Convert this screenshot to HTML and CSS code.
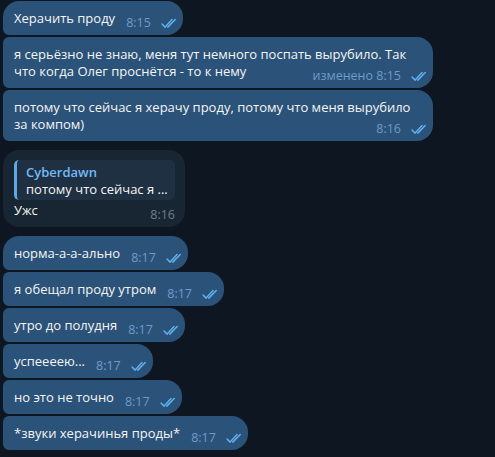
FILE: index.html
```html
<!DOCTYPE html>
<html lang="ru">
<head>
<meta charset="utf-8">
<title>Chat</title>
<link rel="stylesheet" href="styles.css">
</head>
<body>
<div class="chat">
  <div class="group">
    <div class="msg out first">Херачить проду<span class="meta"><span class="time">8:15</span><svg class="ticks" viewBox="0 0 16 10"><path d="M1 5.4 L3.9 8.4 L10.4 1.2"/><path d="M6.4 8.4 L13.4 1.2"/></svg></span></div>
    <div class="msg out">я серьёзно не знаю, меня тут немного поспать вырубило. Так что когда Олег проснётся - то к нему<span class="meta"><span class="time">изменено 8:15</span><svg class="ticks" viewBox="0 0 16 10"><path d="M1 5.4 L3.9 8.4 L10.4 1.2"/><path d="M6.4 8.4 L13.4 1.2"/></svg></span></div>
    <div class="msg out">потому что сейчас я херачу проду, потому что меня вырубило за компом)<span class="meta"><span class="time">8:16</span><svg class="ticks" viewBox="0 0 16 10"><path d="M1 5.4 L3.9 8.4 L10.4 1.2"/><path d="M6.4 8.4 L13.4 1.2"/></svg></span></div>
  </div>
  <div class="group">
    <div class="msg in">
      <div class="reply">
        <div class="reply-name">Cyberdawn</div>
        <div class="reply-text">потому что сейчас я ...</div>
      </div>
      <div class="body">Ужс<span class="meta"><span class="time">8:16</span></span></div>
    </div>
  </div>
  <div class="group">
    <div class="msg out first">норма-а-а-ально<span class="meta"><span class="time">8:17</span><svg class="ticks" viewBox="0 0 16 10"><path d="M1 5.4 L3.9 8.4 L10.4 1.2"/><path d="M6.4 8.4 L13.4 1.2"/></svg></span></div>
    <div class="msg out">я обещал проду утром<span class="meta"><span class="time">8:17</span><svg class="ticks" viewBox="0 0 16 10"><path d="M1 5.4 L3.9 8.4 L10.4 1.2"/><path d="M6.4 8.4 L13.4 1.2"/></svg></span></div>
    <div class="msg out">утро до полудня<span class="meta"><span class="time">8:17</span><svg class="ticks" viewBox="0 0 16 10"><path d="M1 5.4 L3.9 8.4 L10.4 1.2"/><path d="M6.4 8.4 L13.4 1.2"/></svg></span></div>
    <div class="msg out">успеееею...<span class="meta"><span class="time">8:17</span><svg class="ticks" viewBox="0 0 16 10"><path d="M1 5.4 L3.9 8.4 L10.4 1.2"/><path d="M6.4 8.4 L13.4 1.2"/></svg></span></div>
    <div class="msg out">но это не точно<span class="meta"><span class="time">8:17</span><svg class="ticks" viewBox="0 0 16 10"><path d="M1 5.4 L3.9 8.4 L10.4 1.2"/><path d="M6.4 8.4 L13.4 1.2"/></svg></span></div>
    <div class="msg out">*звуки херачинья проды*<span class="meta"><span class="time">8:17</span><svg class="ticks" viewBox="0 0 16 10"><path d="M1 5.4 L3.9 8.4 L10.4 1.2"/><path d="M6.4 8.4 L13.4 1.2"/></svg></span></div>
  </div>
</div>
</body>
</html>
```
FILE: styles.css
```css
html, body {
  margin: 0;
  background: #0e1621;
}
body {
  padding: 1px 0 0 3px;
  font-family: "Open Sans", "Noto Sans", sans-serif;
  font-size: 13px;
  line-height: 17px;
  color: #f5f5f5;
}
.chat {
  display: flex;
  flex-direction: column;
  gap: 9px;
}
.group {
  display: flex;
  flex-direction: column;
  align-items: flex-start;
  gap: 2px;
}
.msg {
  display: flow-root;
  max-width: 430px;
  box-sizing: border-box;
  padding: 9px 11px 4px 11px;
  border-radius: 6px 16px 16px 6px;
}
.msg.first {
  border-top-left-radius: 16px;
}
.msg.out {
  background: #2b5278;
}
.msg.in {
  background: #182533;
  border-radius: 16px;
  padding: 10px 10px 4px 11px;
}
.meta {
  float: right;
  display: flex;
  align-items: center;
  margin: 5px -6px 0 11px;
  height: 16px;
  font-size: 12.5px;
  line-height: 16px;
}
.out .time {
  color: #6d9ccb;
}
.in .meta {
  margin-right: 0;
}
.in .time {
  color: #6d7f8f;
}
.ticks {
  width: 17px;
  height: 11px;
  margin-left: 10px;
  fill: none;
  stroke: #5fb0ef;
  stroke-width: 1.4;
  stroke-linecap: round;
  stroke-linejoin: round;
}
.reply {
  width: 161px;
  box-sizing: border-box;
  padding: 4px 8px 2px 9px;
  margin-bottom: 2px;
  border-radius: 5px;
  background: #1f3042;
  border-left: 3px solid #5fa8e3;
}
.reply-name {
  color: #71baf5;
  font-weight: 600;
}
.reply-text {
  white-space: nowrap;
  overflow: hidden;
}
```
